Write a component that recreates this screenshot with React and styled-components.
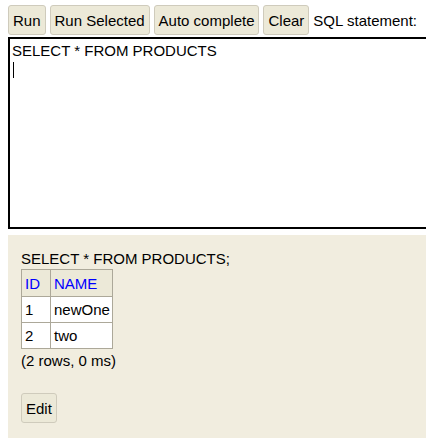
import styled, { createGlobalStyle } from "styled-components";

const Global = createGlobalStyle`
    html, body {
        margin: 0;
        padding: 0;
        background: #ffffff;
        overflow: hidden;
    }
    body {
        font-family: "Liberation Sans", Arial, sans-serif;
        font-size: 15px;
        color: #000000;
    }
`

const rows = [
    { id: 1, name: "newOne" },
    { id: 2, name: "two" },
]

export default function App() {
    return (
        <>
            <Global />
            <Page>
                <Toolbar>
                    <Button>Run</Button>
                    <Button>Run Selected</Button>
                    <Button>Auto complete</Button>
                    <Button>Clear</Button>
                    <Label>SQL statement:</Label>
                </Toolbar>
                <Editor>
                    <Line>SELECT * FROM PRODUCTS</Line>
                    <Caret />
                </Editor>
                <Result>
                    <Query>SELECT * FROM PRODUCTS;</Query>
                    <Table>
                        <thead>
                            <tr>
                                <Th $w={23}>ID</Th>
                                <Th>NAME</Th>
                            </tr>
                        </thead>
                        <tbody>
                            {rows.map((r) => (
                                <tr key={r.id}>
                                    <Td>{r.id}</Td>
                                    <Td>{r.name}</Td>
                                </tr>
                            ))}
                        </tbody>
                    </Table>
                    <Count>(2 rows, 0 ms)</Count>
                    <EditButton>Edit</EditButton>
                </Result>
            </Page>
        </>
    );
}

const Page = styled.div`
    width: 426px;
    height: 438px;
    padding-left: 8px;
    box-sizing: border-box;
    display: flex;
    flex-direction: column;
`
const Toolbar = styled.div`
    display: flex;
    align-items: center;
    gap: 4px;
    padding-top: 5px;
    height: 30px;
    margin-bottom: 2px;
`
const Button = styled.button`
    height: 30px;
    padding: 0 4px;
    font-family: "Liberation Sans", Arial, sans-serif;
    font-size: 15px;
    color: #000000;
    background: #ece9d8;
    border: 1px solid #cfcbbc;
    border-radius: 3px;
    white-space: nowrap;
`
const Label = styled.span`
    white-space: nowrap;
`
const Editor = styled.div`
    height: 192px;
    margin-right: -20px;
    border: 2px solid #000000;
    border-right: none;
    padding: 3px 2px;
    box-sizing: border-box;
    background: #ffffff;
`
const Line = styled.div`
    line-height: 18px;
`
const Caret = styled.div`
    width: 1px;
    height: 16px;
    margin-top: 2px;
    margin-left: 1px;
    background: #000000;
`
const Result = styled.div`
    flex: 1;
    margin-top: 6px;
    background: #f1eddf;
    padding: 14px 13px 0;
    display: flex;
    flex-direction: column;
    align-items: flex-start;
`
const Query = styled.div`
    line-height: 20px;
`
const Table = styled.table`
    border-collapse: collapse;
    background: #ffffff;
`
const Th = styled.th`
    text-align: left;
    font-weight: normal;
    color: #0000ff;
    background: #ece9d8;
    border: 1px solid #aca899;
    height: 26px;
    padding: 0 2px 0 3px;
    width: ${(p) => (p.$w ? `${p.$w}px` : "auto")};
`
const Td = styled.td`
    border: 1px solid #aca899;
    height: 25px;
    padding: 0 2px 0 3px;
`
const Count = styled.div`
    margin-top: 2px;
    line-height: 20px;
`
const EditButton = styled(Button)`
    margin-top: 22px;
    height: 30px;
    padding: 0 4px;
`
